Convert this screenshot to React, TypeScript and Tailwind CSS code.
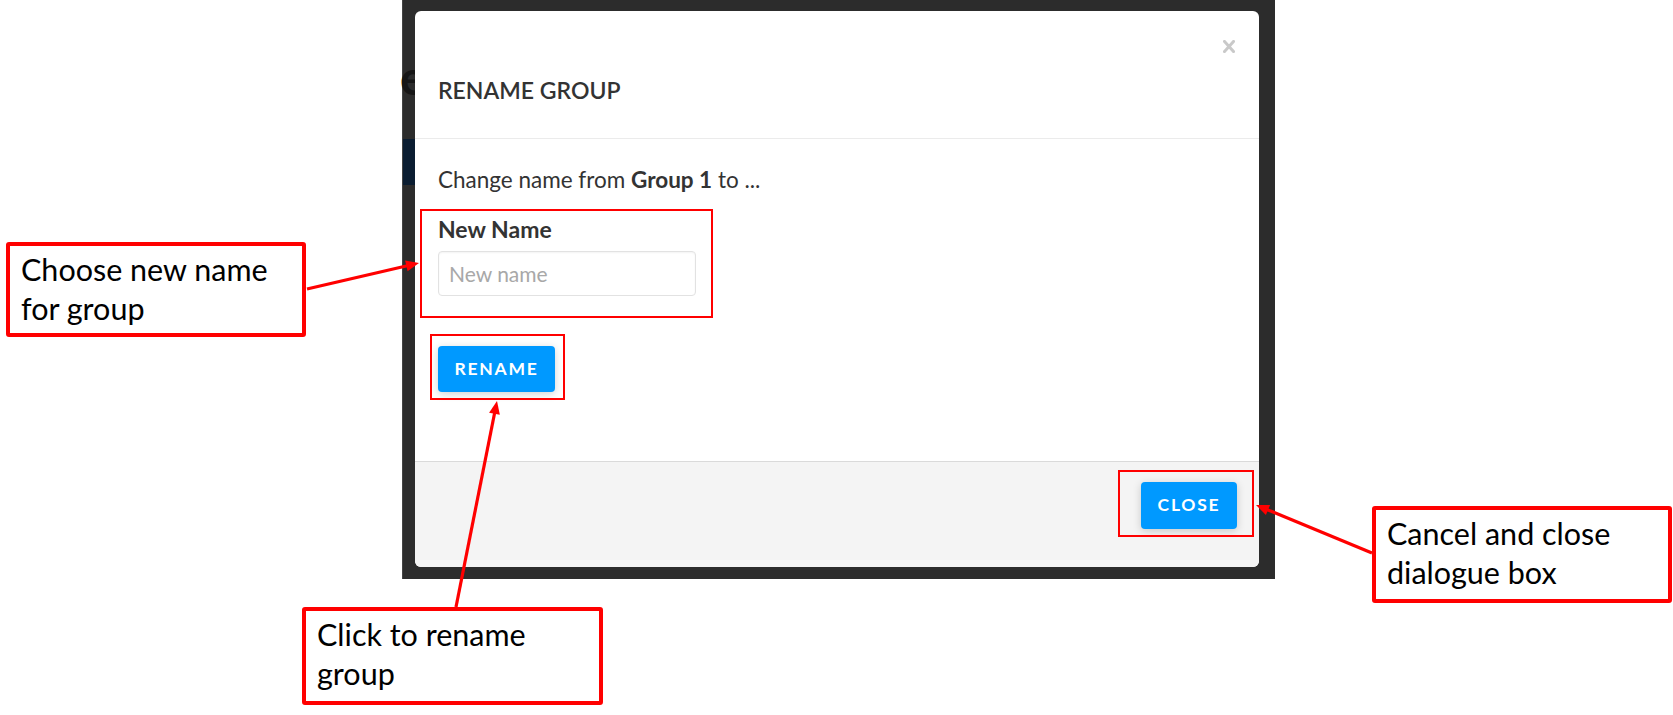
import React from "react";

function Arrow({ x1, y1, x2, y2 }: { x1: number; y1: number; x2: number; y2: number }) {
  const dx = x2 - x1;
  const dy = y2 - y1;
  const len = Math.hypot(dx, dy);
  const ux = dx / len;
  const uy = dy / len;
  const hl = 13;
  const hw = 5.5;
  const bx = x2 - ux * hl;
  const by = y2 - uy * hl;
  const nx = -uy;
  const ny = ux;
  const pts = `${x2},${y2} ${bx + nx * hw},${by + ny * hw} ${bx - nx * hw},${by - ny * hw}`;
  return (
    <g>
      <line x1={x1} y1={y1} x2={bx + ux * 2} y2={by + uy * 2} stroke="#ff0000" strokeWidth={3.2} />
      <polygon points={pts} fill="#ff0000" />
    </g>
  );
}

function Callout({ className, lines }: { className: string; lines: string[] }) {
  return (
    <div
      className={`absolute z-20 bg-white border-[4px] border-[#ff0000] rounded-[3px] pl-[11px] pt-[4px] text-[30.5px] leading-[39px] text-black ${className}`}
    >
      {lines.map((l) => (
        <div key={l} className="whitespace-nowrap">
          {l}
        </div>
      ))}
    </div>
  );
}

export default function App() {
  return (
    <div className="relative w-[1673px] h-[715px] bg-white overflow-hidden font-['Lato','Liberation_Sans',sans-serif]">
      {/* screenshot of the dialog */}
      <div className="relative ml-[402px] w-[873px] h-[579px] bg-[#2c2c2c] pt-[11px] pl-[12px] border-l border-[#444]">
        <span className="absolute left-[-3px] top-[49px] text-[48px] leading-[56px] font-bold text-[#161616]">e</span>
        <div className="absolute left-0 top-[139px] w-[12px] h-[46px] bg-[#0b1d31]" />
        <div className="relative z-10 w-[844px] h-[556px] bg-white rounded-[6px] flex flex-col overflow-hidden">
          {/* header */}
          <div className="h-[128px] shrink-0 border-b border-[#ebebeb] flex flex-col px-[23px]">
            <div className="flex justify-end pt-[29px] pr-[1px]">
              <svg width="12" height="13" viewBox="0 0 12 13">
                <path d="M1.5 1.5 L10.5 11.5 M10.5 1.5 L1.5 11.5" stroke="#c9c9c9" strokeWidth="3" strokeLinecap="square" />
              </svg>
            </div>
            <div className="mt-[23px] text-[23px] leading-[28px] font-semibold text-[#333]">RENAME GROUP</div>
          </div>
          {/* body */}
          <div className="flex-1 px-[23px] pt-[26px] flex flex-col items-start text-[#333]">
            <div className="text-[22.5px] leading-[30px]">
              Change name from <span className="font-bold">Group 1</span> to ...
            </div>
            <div className="mt-[19px] text-[23px] leading-[30px] font-bold">New Name</div>
            <input
              className="mt-[7px] w-[258px] h-[45px] border border-[#e2e2e2] rounded-[4px] px-[10px] text-[21px] text-[#333] placeholder:text-[#a8a8a8] shadow-[inset_0_1px_2px_rgba(0,0,0,0.05)] outline-none"
              placeholder="New name"
            />
            <button className="mt-[50px] w-[117px] h-[46px] bg-[#0099ff] rounded-[4px] text-white font-bold text-[17.5px] tracking-[0.1em] shadow-[0_2px_8px_rgba(0,0,0,0.18)]">
              RENAME
            </button>
          </div>
          {/* footer */}
          <div className="h-[106px] shrink-0 bg-[#f4f4f4] border-t border-[#dadada] flex justify-end items-start pt-[20px] pr-[22px]">
            <button className="w-[96px] h-[47px] bg-[#0099ff] rounded-[4px] text-white font-bold text-[17.5px] tracking-[0.1em] shadow-[0_2px_8px_rgba(0,0,0,0.18)]">
              CLOSE
            </button>
          </div>
        </div>
      </div>

      {/* highlight boxes */}
      <div className="absolute z-20 left-[420px] top-[209px] w-[293px] h-[109px] border-2 border-[#ff0000]" />
      <div className="absolute z-20 left-[430px] top-[334px] w-[135px] h-[66px] border-2 border-[#ff0000]" />
      <div className="absolute z-20 left-[1118px] top-[470px] w-[136px] h-[67px] border-2 border-[#ff0000]" />

      {/* callouts */}
      <Callout className="left-[6px] top-[242px] w-[300px] h-[95px]" lines={["Choose new name", "for group"]} />
      <Callout className="left-[302px] top-[607px] w-[301px] h-[98px]" lines={["Click to rename", "group"]} />
      <Callout className="left-[1372px] top-[506px] w-[300px] h-[97px]" lines={["Cancel and close", "dialogue box"]} />

      {/* arrows */}
      <svg className="absolute z-30 left-0 top-0 pointer-events-none" width="1673" height="715">
        <Arrow x1={307} y1={289} x2={419} y2={263} />
        <Arrow x1={456} y1={607} x2={497} y2={401} />
        <Arrow x1={1372} y1={553} x2={1256} y2={505} />
      </svg>
    </div>
  );
}
